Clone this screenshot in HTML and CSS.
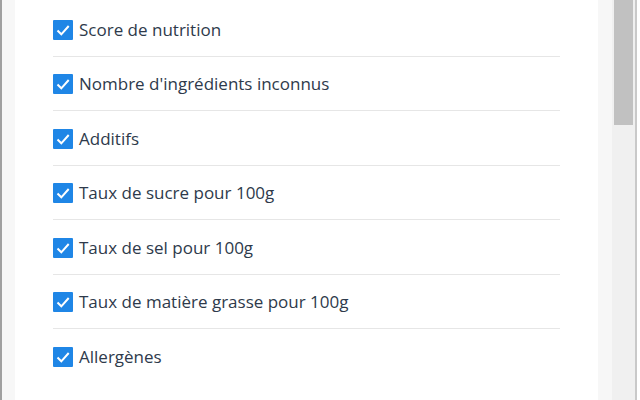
FILE: index.html
```html
<!DOCTYPE html>
<html>
<head>
    <title>Options</title>
    <meta charset="utf-8">
    <link rel="stylesheet" href="styles.css">
</head>
<body>
    <div class="frame">
        <div class="edge"></div>
        <div class="gutter"></div>
        <div class="panel">
            <ul class="options">
                <li class="option"><span class="box"><svg viewBox="0 0 20 20"><path d="M4.5 10.5l3.8 3.8 7.4-8.3"/></svg></span>Score de nutrition</li>
                <li class="option"><span class="box"><svg viewBox="0 0 20 20"><path d="M4.5 10.5l3.8 3.8 7.4-8.3"/></svg></span>Nombre d'ingrédients inconnus</li>
                <li class="option"><span class="box"><svg viewBox="0 0 20 20"><path d="M4.5 10.5l3.8 3.8 7.4-8.3"/></svg></span>Additifs</li>
                <li class="option"><span class="box"><svg viewBox="0 0 20 20"><path d="M4.5 10.5l3.8 3.8 7.4-8.3"/></svg></span>Taux de sucre pour 100g</li>
                <li class="option"><span class="box"><svg viewBox="0 0 20 20"><path d="M4.5 10.5l3.8 3.8 7.4-8.3"/></svg></span>Taux de sel pour 100g</li>
                <li class="option"><span class="box"><svg viewBox="0 0 20 20"><path d="M4.5 10.5l3.8 3.8 7.4-8.3"/></svg></span>Taux de matière grasse pour 100g</li>
                <li class="option"><span class="box"><svg viewBox="0 0 20 20"><path d="M4.5 10.5l3.8 3.8 7.4-8.3"/></svg></span>Allergènes</li>
            </ul>
        </div>
        <div class="gutter right"></div>
        <div class="scrollbar"><div class="thumb"></div></div>
        <div class="rule"></div>
        <div class="tail"></div>
    </div>
</body>
</html>
```

FILE: styles.css
```css
body {
    margin: 0;
    font-family: "Open Sans", "Noto Sans", sans-serif;
    background-color: #f7f7f7;
}

.frame {
    display: flex;
    height: 400px;
    overflow: hidden;
}

.edge {
    width: 2px;
    background-color: #a0a0a0;
}

.gutter {
    width: 13px;
    background-color: #f7f7f7;
}

.gutter.right {
    width: 14px;
}

.panel {
    width: 583px;
    background-color: #ffffff;
}

.options {
    list-style: none;
    margin: 0;
    padding: 2px 38px 0 38px;
    width: 507px;
}

.option {
    display: flex;
    align-items: center;
    padding: 17.5px 0 16px 0;
    border-bottom: 1px solid #e6e6e6;
    font-size: 17px;
    line-height: 20px;
    color: #2e3a4b;
}

.option:last-child {
    border-bottom: none;
}

.box {
    width: 20px;
    height: 20px;
    margin-right: 6px;
    background-color: #1f86e6;
    border-radius: 1px;
    flex-shrink: 0;
}

.box svg {
    display: block;
    width: 20px;
    height: 20px;
    fill: none;
    stroke: #ffffff;
    stroke-width: 2;
}

.scrollbar {
    width: 19px;
    padding: 0 2px;
    background-color: #f0f0f0;
}

.thumb {
    height: 125px;
    background-color: #c1c1c1;
}

.rule {
    width: 2px;
    background-color: #c9c9c9;
}

.tail {
    flex: 1;
    background-color: #ffffff;
}
```
